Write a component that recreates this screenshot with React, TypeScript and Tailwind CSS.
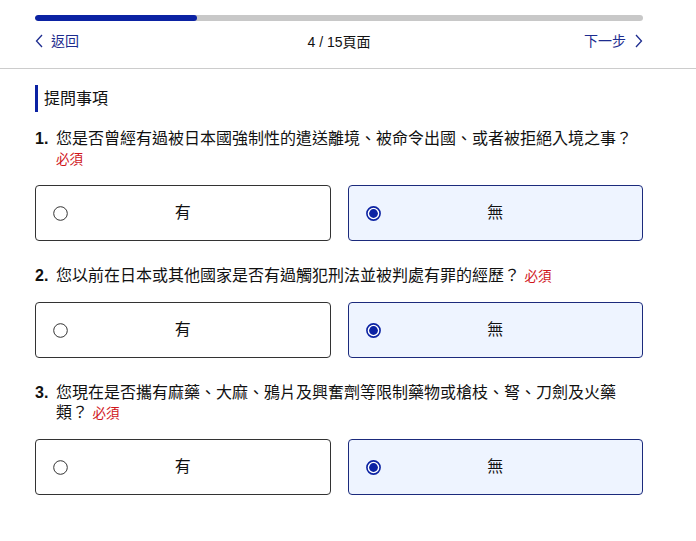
import React from "react";

const font = { fontFamily: '"Liberation Sans", "Noto Sans CJK TC", sans-serif' };

type Question = { no: number; text: string };

const questions: Question[] = [
  { no: 1, text: "您是否曾經有過被日本國強制性的遣送離境、被命令出國、或者被拒絕入境之事？" },
  { no: 2, text: "您以前在日本或其他國家是否有過觸犯刑法並被判處有罪的經歷？" },
  { no: 3, text: "您現在是否攜有麻藥、大麻、鴉片及興奮劑等限制藥物或槍枝、弩、刀劍及火藥類？" },
];

const Radio = ({ checked }: { checked: boolean }) => (
  <svg width="15" height="15" viewBox="0 0 15 15" className="shrink-0">
    {checked ? (
      <>
        <circle cx="7.5" cy="7.5" r="6.6" fill="#fff" stroke="#0b22a3" strokeWidth="1.6" />
        <circle cx="7.5" cy="7.5" r="4.4" fill="#0b22a3" />
      </>
    ) : (
      <circle cx="7.5" cy="7.5" r="6.8" fill="#fff" stroke="#333" strokeWidth="1" />
    )}
  </svg>
);

const Option = ({ label, checked }: { label: string; checked: boolean }) => (
  <div
    className={
      checked
        ? "flex h-[56px] items-center rounded-[4px] border border-[#1b2a7c] bg-[#eef4ff] px-[17px]"
        : "flex h-[56px] items-center rounded-[4px] border border-[#333] bg-white px-[17px]"
    }
  >
    <Radio checked={checked} />
    <span className="flex-1 text-center text-[16px] text-[#111]">{label}</span>
    <span className="w-[15px]" />
  </div>
);

export default function App() {
  return (
    <div className="min-h-[541px] w-[696px] bg-white" style={font}>
      <div className="border-b border-[#cccccc] pb-[17px] pt-[15px]">
        <div className="ml-[35px] w-[608px]">
          <div className="h-[6px] overflow-hidden rounded-full bg-[#c8c8c8]">
            <div className="h-full rounded-full bg-[#0b22a3]" style={{ width: `${(4 / 15) * 100}%` }} />
          </div>
          <div className="mt-[10px] flex h-[20px] items-center justify-between text-[14px]">
            <a className="flex w-[120px] items-center gap-[8px] text-[#1d2c8f]">
              <svg width="8" height="14" viewBox="0 0 8 14">
                <polyline points="7,1 1.5,7 7,13" fill="none" stroke="#1d2c8f" strokeWidth="1.3" />
              </svg>
              <span>返回</span>
            </a>
            <span className="mt-[3px] text-[#111]">4 / 15頁面</span>
            <a className="flex w-[120px] items-center justify-end gap-[9px] text-[#1d2c8f]">
              <span>下一步</span>
              <svg width="8" height="14" viewBox="0 0 8 14">
                <polyline points="1,1 6.5,7 1,13" fill="none" stroke="#1d2c8f" strokeWidth="1.3" />
              </svg>
            </a>
          </div>
        </div>
      </div>

      <div className="ml-[35px] w-[608px] pb-[40px]">
        <div className="mt-[16px] flex h-[27px] items-center border-l-[3px] border-[#0b22a3] pl-[6px] text-[16px] text-[#111]">
          提問事項
        </div>

        {questions.map((q, i) => (
          <div key={q.no} className={i === 0 ? "mt-[17px]" : "mt-[25px]"}>
            <div className="flex text-[16px] leading-[20px] text-[#111]">
              <span className="w-[21px] shrink-0 font-bold">{q.no}.</span>
              <p className="flex-1">
                {q.text} <span className="text-[13.5px] leading-none text-[#d0161b]">必須</span>
              </p>
            </div>
            <div className="mt-[16px] grid grid-cols-2 gap-[17px]">
              <Option label="有" checked={false} />
              <Option label="無" checked={true} />
            </div>
          </div>
        ))}
      </div>
    </div>
  );
}
